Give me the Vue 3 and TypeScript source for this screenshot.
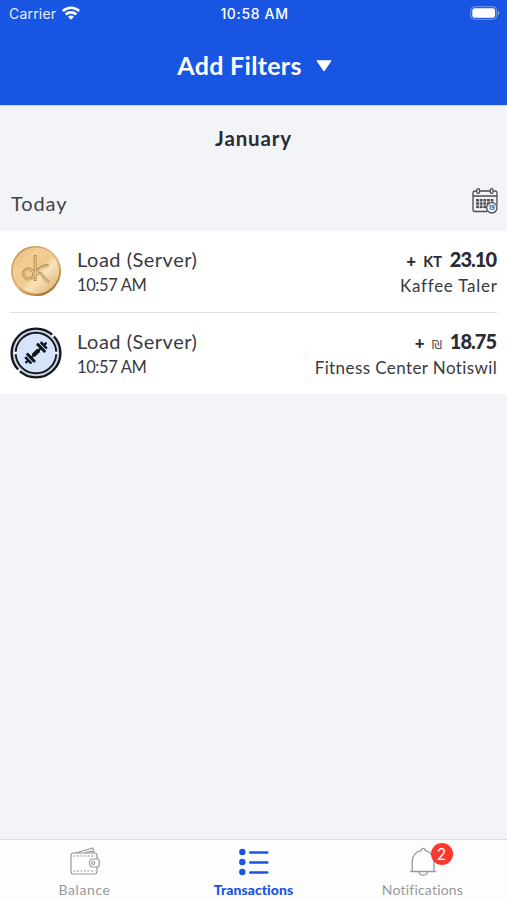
<script setup lang="ts">
interface Transaction {
  kind: 'coin' | 'gym'
  title: string
  time: string
  currency: string
  amount: string
  place: string
}

const transactions: Transaction[] = [
  { kind: 'coin', title: 'Load (Server)', time: '10:57 AM', currency: 'KT', amount: '23.10', place: 'Kaffee Taler' },
  { kind: 'gym', title: 'Load (Server)', time: '10:57 AM', currency: '₪', amount: '18.75', place: 'Fitness Center Notiswil' },
]
const dayColumns = [0, 1, 2, 3, 4]
const dayRows = [0, 1, 2]
</script>

<template>
  <div class="screen">
    <header class="header">
      <div class="status">
        <div class="carrier">
          <span>Carrier</span>
          <svg width="18" height="14" viewBox="0 0 18 14" fill="none" stroke="#fff" stroke-width="2.7">
            <path d="M.9 5.1C5.6.6 12.4.6 17.1 5.1" />
            <path d="M3.7 8.5c3-2.8 7.6-2.8 10.6 0" />
            <path d="M6 10.8c1.7-1.6 4.3-1.6 6 0L9 13.8z" fill="#fff" stroke="none" />
          </svg>
        </div>
        <span class="clock">10:58 AM</span>
        <svg class="battery" width="30" height="14" viewBox="0 0 30 14">
          <rect x=".7" y=".7" width="26" height="12.6" rx="3.8" fill="none" stroke="#fff" stroke-opacity=".42" />
          <rect x="2.3" y="2.3" width="22.8" height="9.4" rx="2.2" fill="#fff" />
          <path d="M28 4.8c1.8.7 1.8 3.7 0 4.4z" fill="#fff" fill-opacity=".5" />
        </svg>
      </div>
      <div class="filter">
        <span>Add Filters</span>
        <svg width="16" height="12" viewBox="0 0 16 12"><path d="M1 .8h14L8 11z" fill="#fff" stroke="#fff" stroke-linejoin="round" /></svg>
      </div>
    </header>

    <h1 class="month"><span>January</span></h1>
    <div class="day">
      <span class="today">Today</span>
      <svg width="26" height="26" viewBox="0 0 26 26" fill="none" stroke="#4b4c50" stroke-width="1.3">
        <path d="M4.6 3H3Q1 3 1 5v16.5q0 2 2 2h12M8 3h10M21.4 3H23q2 0 2 2v12M1 8h24" />
        <rect x="4.8" y=".7" width="2.8" height="4.6" rx="1.4" />
        <rect x="18.2" y=".7" width="2.8" height="4.6" rx="1.4" />
        <g fill="#4b4c50" stroke="none">
          <template v-for="r in dayRows" :key="r">
            <rect v-for="c in dayColumns" :key="c" :x="4.1 + c * 3.65" :y="11 + r * 3.3" width="2.8" height="2.5" />
          </template>
        </g>
        <circle cx="19.8" cy="19.8" r="5.2" fill="#f3f4f7" />
        <text x="19.8" y="21.8" text-anchor="middle" class="date">19</text>
      </svg>
    </div>

    <main class="list">
      <article v-for="t in transactions" :key="t.place" class="row">
        <svg v-if="t.kind === 'coin'" class="logo" width="52" height="52" viewBox="0 0 52 52">
          <defs>
            <linearGradient id="gold" x1="0" y1="0" x2="1" y2="1">
              <stop offset="0" stop-color="#deb475" />
              <stop offset=".28" stop-color="#f2cf96" />
              <stop offset=".5" stop-color="#efca90" />
              <stop offset=".62" stop-color="#fae3b9" />
              <stop offset="1" stop-color="#d8aa68" />
            </linearGradient>
            <linearGradient id="rim" x1="0" y1="0" x2=".7" y2="1">
              <stop offset="0" stop-color="#bd8b48" />
              <stop offset=".3" stop-color="#d3a565" />
              <stop offset=".6" stop-color="#e0b67c" />
              <stop offset="1" stop-color="#a97332" />
            </linearGradient>
          </defs>
          <path d="M26 1c5 0 9 1 13 4 4 2 6 5 9 9 2 4 3 8 3 12s-1 9-4 13c-2 4-5 7-9 9-4 3-8 3-12 3s-9-1-13-3c-4-3-7-6-9-10S1 30 1 26s1-8 3-12 5-7 9-10c4-2 8-3 13-3z" fill="url(#rim)" />
          <circle cx="26" cy="25.6" r="22.7" fill="url(#gold)" stroke="#f4d6a2" stroke-width=".8" />
          <g fill="none" stroke="#b08b52" stroke-width="3">
            <circle cx="18.6" cy="29" r="5" /><path d="M25.2 10v26M38.5 20.5c-6 0-10 3-13 7l5 1c4 2 4 8 9 8" />
          </g>
          <g fill="none" stroke="#e3c28b" stroke-width="1.5">
            <circle cx="18.8" cy="29.2" r="5" /><path d="M25.4 11v24.2M38 21c-6 0-9 3-12 7l5 1c4 2 4 7.500 8 7.500" />
          </g>
        </svg>
        <svg v-else class="logo" width="52" height="52" viewBox="0 0 52 52">
          <circle cx="26" cy="26" r="24" fill="#c9d2df" />
          <circle cx="26" cy="26" r="20.5" fill="#d5e3fb" />
          <g fill="none" stroke="#15171f">
            <circle cx="26" cy="26" r="24.4" stroke-width="2.4" />
            <circle cx="26" cy="26" r="20.3" stroke-width="1.9" />
          </g>
          <path d="M41.800 9.800L46.500 5M5.500 47l4.700-4.800M4 26h4M44 26h4" stroke="#f5f8fd" stroke-width="2.4" />
          <g transform="translate(26 25.800) rotate(-44)" fill="#10131b">
            <rect x="-4" y="-2.100" width="8" height="4.200" rx=".5" />
            <rect x="-7" y="-1" width="14" height="2" />
            <rect x="-8.600" y="-6" width="3" height="12" rx="1.200" />
            <rect x="5.600" y="-6" width="3" height="12" rx="1.200" />
            <rect x="-12" y="-4.600" width="2.500" height="9.200" rx="1" />
            <rect x="9.500" y="-4.600" width="2.500" height="9.200" rx="1" />
            <rect x="-14.600" y="-1.200" width="2.800" height="2.400" rx=".8" />
            <rect x="11.800" y="-1.200" width="2.800" height="2.400" rx=".8" />
          </g>
        </svg>
        <div class="info">
          <span class="title">{{ t.title }}</span>
          <span class="time">{{ t.time }}</span>
        </div>
        <div class="sum">
          <div class="money">
            <span class="plus">+</span>
            <span :class="['currency', t.kind]">{{ t.currency }}</span>
            <strong class="amount">{{ t.amount }}</strong>
          </div>
          <span :class="['place', t.kind]">{{ t.place }}</span>
        </div>
      </article>
    </main>

    <nav class="tabs">
      <div class="tab">
        <svg width="32" height="30" viewBox="0 0 32 30" fill="none" stroke="#9a9a9c" stroke-width="1.2">
          <path d="M28 12V8.500Q28 6 25.500 6H4.200Q2 6 2 8.400v16Q2 27 4.500 27h21q2.500 0 2.500-2.500V20" />
          <path d="M6.500 6L24 1l1.300 5M16 5.800l7-1.900.6 1.900" />
          <path d="M28 12h-4q-3.500 0-3.500 4t3.500 4h4q2.200 0 2.200-2v-4q0-2-2.200-2z" />
          <circle cx="24.300" cy="16" r="1.500" />
          <path d="M4.500 9h21.500M4.500 24h21.500" stroke-dasharray="2 1.500" />
        </svg>
        <span class="label balance">Balance</span>
      </div>
      <div class="tab active">
        <svg width="32" height="30" viewBox="0 0 32 30" fill="#1855e3">
          <circle cx="4.300" cy="5" r="3.200" /><circle cx="4.300" cy="15" r="3.200" /><circle cx="4.300" cy="25" r="3.200" />
          <rect x="11" y="4.200" width="19.500" height="2.600" rx="1.200" /><rect x="11" y="14.200" width="19.500" height="2.600" rx="1.200" /><rect x="11" y="24.200" width="19.500" height="2.600" rx="1.200" />
        </svg>
        <span class="label transactions">Transactions</span>
      </div>
      <div class="tab">
        <div class="bell">
          <svg width="32" height="30" viewBox="0 0 32 30" fill="none" stroke="#9a9a9c" stroke-width="1.300" stroke-linejoin="round">
            <path d="M3 24.500h26M5.200 24.300V15Q5.200 6 14.300 3.400q0-2 1.900-2t1.900 2Q27 6 27 15v9.300M12 25q.5 3.200 4.200 3.200t4.200-3.200" />
          </svg>
          <span class="badge">2</span>
        </div>
        <span class="label notifications">Notifications</span>
      </div>
    </nav>
  </div>
</template>

<style>
body { margin: 0; background: #f3f4f7; }
</style>

<style scoped>
.screen { width: 507px; height: 900px; display: flex; flex-direction: column; background: #f3f4f7; color: #2b2c31; font-family: Lato, sans-serif; font-variant-ligatures: none; overflow: hidden; white-space: nowrap; }
.header { height: 105px; flex: none; background: #1855e3; color: #fff; border-bottom: 1px solid #c7d7f8; box-sizing: content-box; margin-bottom: -1px; }
.status { height: 27px; display: grid; grid-template-columns: 1fr auto 1fr; align-items: center; padding: 0 7px 0 9px; font-family: Inter, sans-serif; font-size: 14px; }
.carrier { display: flex; align-items: center; gap: 6px; color: #e9effe; letter-spacing: .2px; }
.carrier svg { margin-top: -1px; }
.clock { font-weight: 500; font-size: 14px; letter-spacing: .65px; }
.battery { justify-self: end; margin-top: -1px; }
.filter { height: 76px; display: flex; justify-content: center; align-items: center; gap: 14px; padding-left: 2px; font-size: 25px; font-weight: 700; letter-spacing: .3px; }
.filter svg { margin-top: 1px; }
.month { height: 65px; margin: 0; display: flex; align-items: center; justify-content: center; font-size: 20.5px; font-weight: 700; letter-spacing: .85px; }
.day { height: 61px; flex: none; display: flex; justify-content: space-between; align-items: center; padding: 0 9px 0 11px; box-sizing: border-box; }
.today { font-size: 20px; letter-spacing: .9px; color: #424349; padding-top: 4px; }
.date { font: 700 5.5px Inter, sans-serif; fill: #4b4c50; stroke: none; }
.list { background: #fff; height: 163px; flex: none; }
.row { display: flex; height: 81px; box-sizing: border-box; margin: 0 10px; align-items: center; padding-bottom: 1px; }
.row + .row { border-top: 1px solid #dde0e4; height: 82px; }
.logo { flex: none; }
.info, .sum { display: flex; flex-direction: column; padding-top: 2px; }
.info { margin-left: 15px; }
.title { font-size: 20px; line-height: 27px; letter-spacing: .5px; color: #393a40; }
.time, .place { font-size: 17px; line-height: 25px; color: #393a40; }
.time { font-size: 16.5px; letter-spacing: -.4px; }
.place.coin { letter-spacing: .74px; margin-right: -.6px; }
.place.gym { letter-spacing: .41px; margin-right: -.3px; }
.sum { margin-left: auto; align-items: flex-end; }
.money { display: flex; align-items: baseline; height: 27px; line-height: 27px; font-weight: 700; }
.plus { font-size: 17px; font-weight: 900; }
.currency { font-size: 14.5px; margin: 0 8px 0 7px; }
.currency.gym { font: 400 13px "DejaVu Sans", sans-serif; color: #55565b; }
.amount { font-size: 20px; letter-spacing: -1px; margin-right: 1px; }
.tabs { margin-top: auto; height: 61px; flex: none; box-sizing: border-box; border-top: 1px solid #dedee0; background: #fdfdfe; display: grid; grid-template-columns: repeat(3, 1fr); }
.tab { display: flex; flex-direction: column; align-items: center; padding-top: 7px; color: #98999c; }
.tab.active { color: #1855e3; }
.label { font-size: 14px; line-height: 18px; margin-top: 4px; }
.balance { letter-spacing: .6px; }
.transactions { font-weight: 900; letter-spacing: .05px; }
.notifications { letter-spacing: .2px; }
.bell { position: relative; width: 32px; height: 30px; }
.badge { position: absolute; left: 24px; top: -4px; width: 22px; height: 22px; border-radius: 50%; background: #fb382e; color: #fff; font: 15.5px/23px Inter, sans-serif; text-align: center; }
</style>
